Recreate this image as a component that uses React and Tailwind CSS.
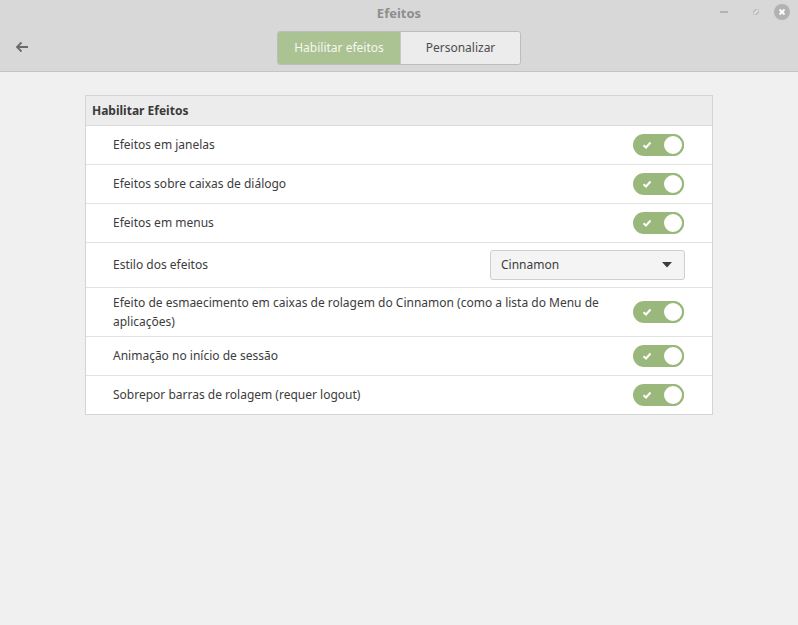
import React from "react";

const rows = [
  { label: "Efeitos em janelas", type: "switch" },
  { label: "Efeitos sobre caixas de diálogo", type: "switch" },
  { label: "Efeitos em menus", type: "switch" },
  { label: "Estilo dos efeitos", type: "select" },
  {
    label: "Efeito de esmaecimento em caixas de rolagem do Cinnamon (como a lista do Menu de aplicações)",
    type: "switch",
  },
  { label: "Animação no início de sessão", type: "switch" },
  { label: "Sobrepor barras de rolagem (requer logout)", type: "switch" },
];

function Switch() {
  return (
    <div className="relative w-[51px] h-[22px] rounded-full bg-[#9ab87c] shrink-0">
      <svg className="absolute left-[9px] top-[7px]" width="10" height="8" viewBox="0 0 10 8">
        <path d="M1.5 4.2 L4 6.5 L8.5 1.5" fill="none" stroke="#fff" strokeWidth="2" />
      </svg>
      <div className="absolute right-0 top-0 w-[22px] h-[22px] rounded-full bg-white border-2 border-[#9ab87c]" />
    </div>
  );
}

function Select() {
  return (
    <div className="w-[195px] h-[30px] flex items-center justify-between pl-[10px] pr-[12px] bg-[#f4f4f4] border border-[#cfcfcf] rounded-[3px] text-[#3c3c3c] mr-[-1px]">
      <span>Cinnamon</span>
      <svg width="10" height="6" viewBox="0 0 10 6">
        <path d="M0 0 L10 0 L5 5.5 Z" fill="#3c3c3c" />
      </svg>
    </div>
  );
}

export default function App() {
  return (
    <div
      className="w-[798px] h-[625px] flex flex-col bg-[#f0f0f0] text-[12px] overflow-hidden"
      style={{ fontFamily: '"Noto Sans", sans-serif' }}
    >
      {/* Header bar */}
      <header className="h-[72px] bg-[#d8d8d8] border-b border-[#c4c4c4] flex flex-col shrink-0">
        <div className="h-[27px] relative flex items-center justify-center">
          <span className="text-[13px] font-bold text-[#8e8e8e]">Efeitos</span>
          <div className="absolute right-[8px] top-[4px] flex items-center gap-[14px]">
            <span className="w-[8px] h-[2px] bg-[#b4b4b4] mr-[10px]" />
            <svg width="8" height="8" viewBox="0 0 8 8">
              <path d="M1 7 L1 3 L3 1 L7 1 L7 5 L5 7 Z" fill="#c2c2c2" />
              <path d="M2 6 L6 2" stroke="#e8e8e8" strokeWidth="1.2" />
            </svg>
            <div className="w-[16px] h-[16px] rounded-full bg-[#b2b2b2] flex items-center justify-center">
              <svg width="8" height="8" viewBox="0 0 8 8">
                <path d="M1.5 1.5 L6.5 6.5 M6.5 1.5 L1.5 6.5" stroke="#fff" strokeWidth="1.8" />
              </svg>
            </div>
          </div>
        </div>
        <div className="flex-1 relative flex items-start justify-center pt-[4px]">
          <svg className="absolute left-[15px] top-[14px]" width="14" height="12" viewBox="0 0 14 12">
            <path d="M13 6 L2 6 M6.5 1.5 L2 6 L6.5 10.5" fill="none" stroke="#6a6a6a" strokeWidth="1.8" />
          </svg>
          <div className="flex h-[34px] rounded-[3px] border border-[#bdbdbd] overflow-hidden">
            <div className="w-[122px] flex items-center justify-center bg-[#abc293] text-[#f6f8f2]">
              Habilitar efeitos
            </div>
            <div className="w-[120px] flex items-center justify-center bg-[#ececec] text-[#4e4e4e] border-l border-[#c8c8c8]">
              Personalizar
            </div>
          </div>
        </div>
      </header>

      {/* Content */}
      <main className="flex-1 pt-[23px] pl-[85px]">
        <section className="w-[628px] border border-[#d4d4d4] bg-white">
          <div className="h-[30px] flex items-center px-[6px] bg-[#ececec] border-b border-[#dcdcdc] font-bold text-[#3a3a3a]">
            Habilitar Efeitos
          </div>
          {rows.map((row, i) => {
            const last = i === rows.length - 1;
            return (
              <div
                key={i}
                className={
                  "flex items-center justify-between pl-[27px] pr-[28px] text-[#3c3c3c] " +
                  (last ? "h-[38px]" : "border-b border-[#e2e2e2] ") +
                  (last
                    ? ""
                    : row.type === "select"
                    ? "h-[45px]"
                    : row.label.length > 60
                    ? "h-[49px]"
                    : "h-[39px]")
                }
              >
                <span className="max-w-[490px] leading-[19px] pb-[1px]">{row.label}</span>
                {row.type === "switch" ? <Switch /> : <Select />}
              </div>
            );
          })}
        </section>
      </main>
    </div>
  );
}
